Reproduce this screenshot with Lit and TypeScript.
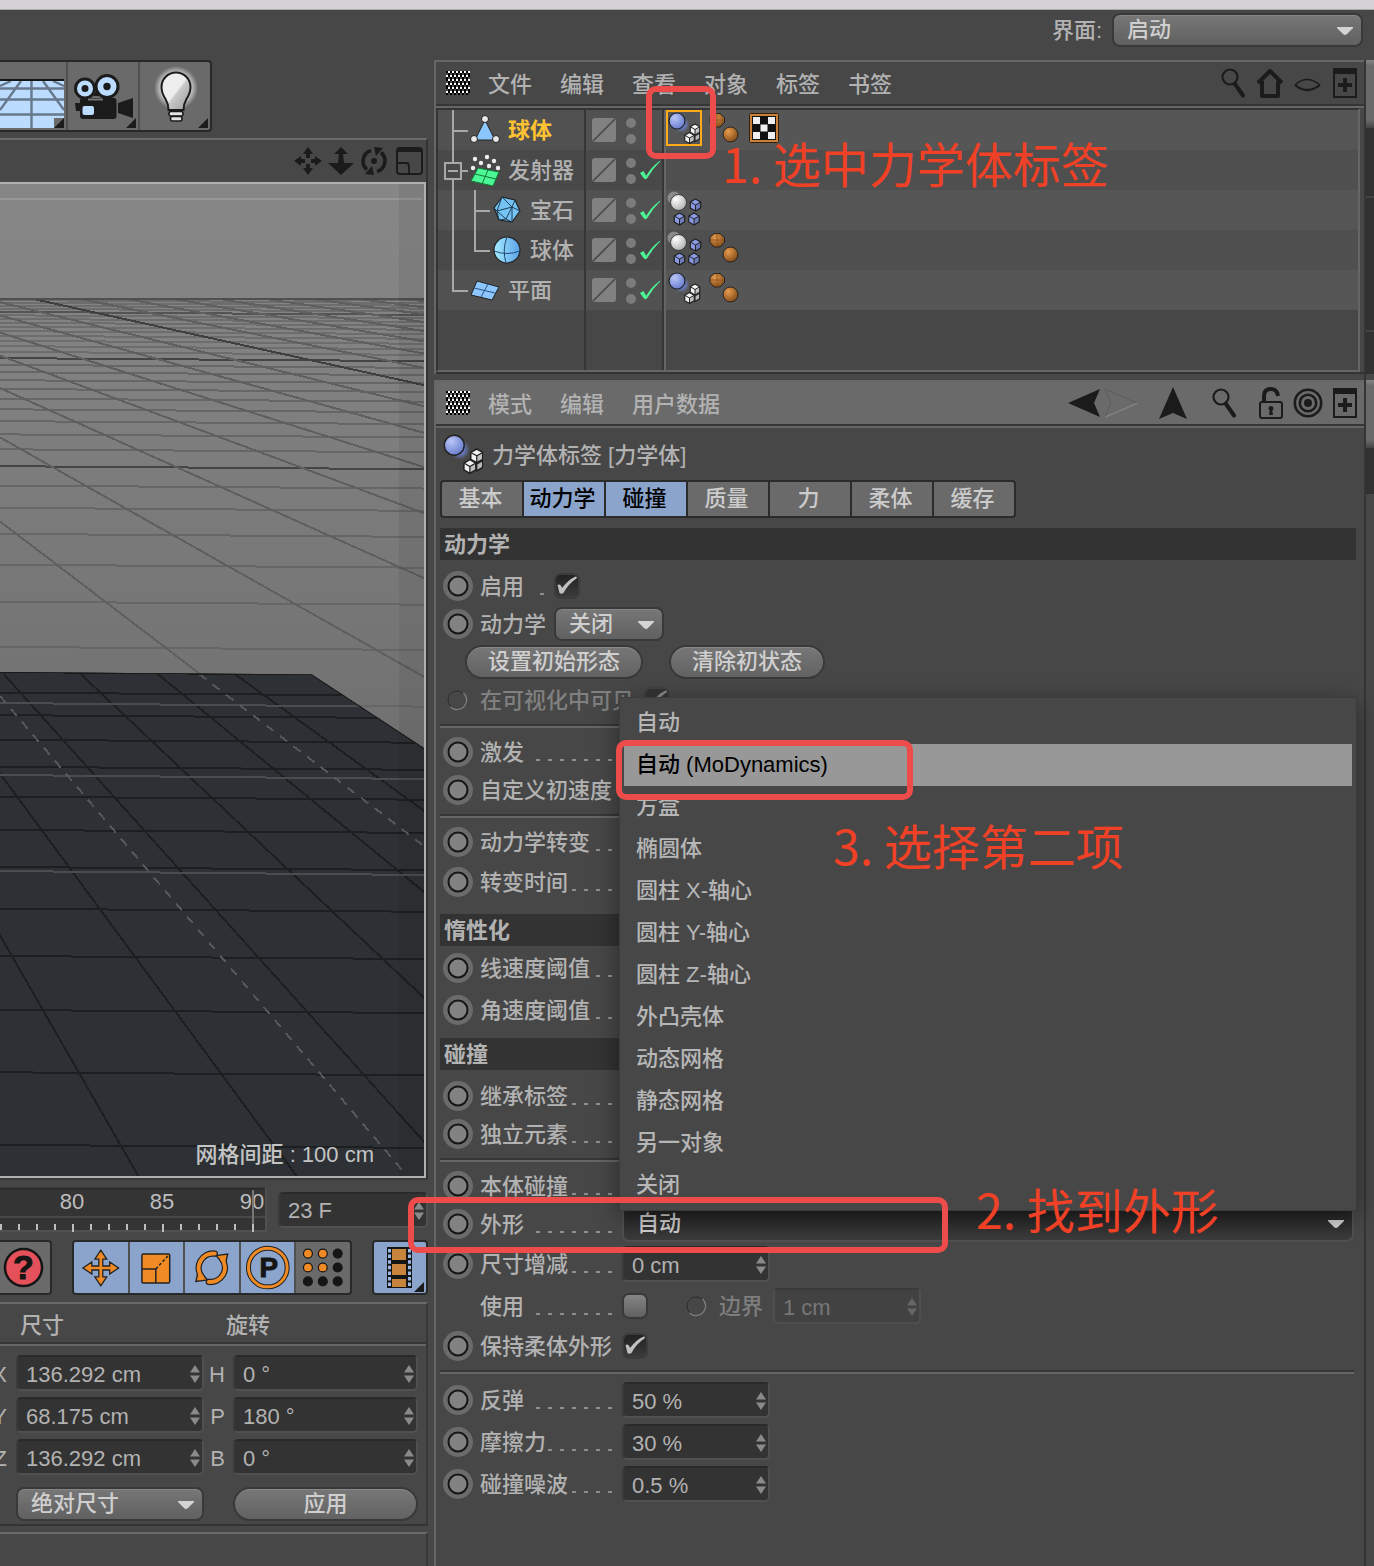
import { LitElement, html, svg, css, nothing } from "lit";
import type { TemplateResult, SVGTemplateResult } from "lit";
import { customElement, state } from "lit/decorators.js";
import { classMap } from "lit/directives/class-map.js";
import { styleMap } from "lit/directives/style-map.js";

/* ---------- shared SVG pieces ---------- */

const chevron = html`<svg class="chevron" viewBox="0 0 16 8" aria-hidden="true">
  <path d="M0 0h16v1l-6 6q-2 2-4 0l-6-6z" fill="currentColor" />
</svg>`;

const spinner = html`<svg class="spin" viewBox="0 0 12 20" aria-hidden="true">
  <path d="M6 1l5 7.500h-10zM6 19l5-7.500h-10z" fill="currentColor" />
</svg>`;

const cornerMark = (x: number, y: number) =>
  svg`<path d="M${x} ${y - 10}v10h-10z" fill="#1b1b1b" />`;

const cube = (cx: number, cy: number, r: number, fill: string): SVGTemplateResult => {
  const w = r * 0.87;
  const h = r / 2;
  return svg`<path
      d="M${cx} ${cy - r}l${w} ${h}v${r}l${-w} ${h}l${-w} ${-h}v${-r}z"
      fill=${fill} stroke="#222" stroke-width="1.2" stroke-linejoin="round" />
    <path d="M${cx - w} ${cy - h}l${w} ${h}l${w} ${-h}M${cx} ${cy}v${r}"
      fill="none" stroke="#222" stroke-width="1" />
    <path d="M${cx} ${cy}l${w} ${-h}v${r}l${-w} ${h}z" fill="#000" opacity=".2" />`;
};

const gradients = svg`<defs>
  <radialGradient id="blue" cx=".35" cy=".3" r=".8">
    <stop offset="0" stop-color="#b9c6f8" /><stop offset="1" stop-color="#6076c8" />
  </radialGradient>
  <radialGradient id="orange" cx=".35" cy=".3" r=".8">
    <stop offset="0" stop-color="#e79a4e" /><stop offset="1" stop-color="#7a4512" />
  </radialGradient>
  <radialGradient id="white" cx=".35" cy=".3" r=".8">
    <stop offset="0" stop-color="#fff" /><stop offset="1" stop-color="#a8a8a8" />
  </radialGradient>
  <radialGradient id="trail"><stop offset=".3" stop-color="#6f86e0" /><stop offset="1" stop-color="#6f86e0" stop-opacity="0" /></radialGradient>
</defs>`;

const dynamicsTag = (size: string) => html`<svg class=${size} viewBox=${size === "tag36" ? "0 0 36 36" : "2 2 32 32"} aria-hidden="true">
  ${gradients}
  <circle cx="15.500" cy="14.500" r="8" fill="url(#trail)" />
  <circle cx="11" cy="11" r="8" fill="url(#blue)" stroke="#222" stroke-width="1.200" />
  ${cube(29, 26, 5.500, "#e6e6e6")}${cube(29, 19.500, 5.500, "#f2f2f2")}${cube(23.500, 28, 5.500, "#f2f2f2")}
</svg>`;

const clonerTag = html`<svg class="tag36" viewBox="0 0 36 36" aria-hidden="true">
  ${gradients}
  <circle cx="8" cy="8" r="6.500" fill="#8b8b8b" />
  <circle cx="12.500" cy="12.500" r="8" fill="url(#white)" stroke="#333" />
  ${cube(29.500, 15, 6, "#8c9be6")}${cube(13.500, 29, 6, "#8c9be6")}${cube(28, 29, 6, "#8c9be6")}
</svg>`;

const ballsTag = html`<svg class="tag35" viewBox="0 0 35 36" aria-hidden="true">
  ${gradients}
  <path d="M6 3.500h6l4.500 4v5l-4.500 4.500h-6l-4-4.500v-5z" fill="url(#orange)" stroke="#222" />
  <path d="M9 3v14M2 10h14" stroke="#8a5420" stroke-width=".8" />
  <circle cx="22.500" cy="24.500" r="7.500" fill="url(#orange)" stroke="#222" />
</svg>`;

const checkerTag = html`<svg class="tag30" viewBox="0 0 30 36" aria-hidden="true">
  <rect x=".5" y="3.500" width="29" height="29" rx="1" fill="#c9813a" stroke="#33200c" />
  <rect x="3" y="6" width="24" height="24" fill="#111" />
  ${[0, 1, 2, 3, 4, 5, 6, 7, 8].map((i) =>
    i % 2 ? nothing : svg`<rect x=${4 + (i % 3) * 7.5} y=${7 + Math.floor(i / 3) * 7.5} width="7" height="7" fill="#f0f0f0" />`
  )}
</svg>`;

const grip = html`<svg class="grip" viewBox="0 0 24 24" shape-rendering="crispEdges" aria-hidden="true">
  ${Array.from({ length: 6 }, (_, r) =>
    Array.from({ length: 6 }, (_, c) => {
      const x = c * 4 + (r % 2 ? 0 : 2);
      return svg`<rect x=${x} y=${r * 4} width="2" height="2" fill="#fff" />
        <rect x=${(x + 2) % 24} y=${r * 4} width="2" height="2" fill="#000" />
        <rect x=${x} y=${r * 4 + 2} width="2" height="2" fill="#000" />`;
    })
  )}
</svg>`;

const searchIcon = html`<svg class="ico" viewBox="0 0 30 30" aria-hidden="true">
  <circle cx="11" cy="9" r="7.500" fill="none" stroke="#1b1b1b" stroke-width="2.200" />
  <path d="M16 16l8 11.500" stroke="#1b1b1b" stroke-width="4" stroke-linecap="round" />
</svg>`;

const homeIcon = html`<svg class="ico" viewBox="0 0 30 30" aria-hidden="true">
  <path d="M2 15l12-12 12 12M6 13v15h16v-15" fill="none" stroke="#1b1b1b" stroke-width="4" stroke-linejoin="round" />
</svg>`;

const eyeIcon = html`<svg class="ico" viewBox="0 0 30 30" aria-hidden="true">
  <path d="M2 17q12-11 25 0" fill="none" stroke="#1b1b1b" stroke-width="1.400" />
  <path d="M2 17q12 10 25 0" fill="none" stroke="#1b1b1b" stroke-width="2.200" />
</svg>`;

const addIcon = html`<svg class="ico" viewBox="0 0 30 30" aria-hidden="true">
  <path d="M4 1h22v28h-22z" fill="none" stroke="#1b1b1b" stroke-width="2" />
  <path d="M3 0h24v6h-24zM13 10h4v5h5v4h-5v5h-4v-5h-5v-4h5z" fill="#1b1b1b" />
</svg>`;

const backIcon = html`<svg class="ico wide" viewBox="0 0 34 30" aria-hidden="true">
  <path d="M1 15l32-14-6 14 6 14z" fill="#1b1b1b" />
</svg>`;

const forwardIcon = html`<svg class="ico wide" viewBox="0 0 34 30" aria-hidden="true">
  <path d="M33 15l-32-14 6 14-6 14" fill="none" stroke="#5c5c5c" />
  <path d="M33 15.500l-32 13.500" stroke="#808080" stroke-width="1.500" />
</svg>`;

const upIcon = html`<svg class="ico tall" viewBox="0 0 30 34" aria-hidden="true">
  <path d="M15 1l14 32-14-6-14 6z" fill="#1b1b1b" />
</svg>`;

const lockIcon = html`<svg class="ico tall" viewBox="0 0 30 34" aria-hidden="true">
  <rect x="4" y="16" width="22" height="16" rx="2" fill="none" stroke="#1b1b1b" stroke-width="2" />
  <path d="M8 15v-5q0-7 7-7q6 0 7 7" fill="none" stroke="#1b1b1b" stroke-width="4" />
  <path d="M15 20a2.500 2.500 0 0 1 1.300 4.600l.7 4.400h-4l.7-4.400a2.500 2.500 0 0 1 1.300-4.600z" fill="#1b1b1b" />
</svg>`;

const targetIcon = html`<svg class="ico" viewBox="0 0 30 30" aria-hidden="true">
  <g fill="none" stroke="#1b1b1b" stroke-width="2.600"><circle cx="15" cy="15" r="13.200" /><circle cx="15" cy="15" r="8.200" /></g>
  <circle cx="15" cy="15" r="4" fill="#1b1b1b" />
</svg>`;

/* ---------- viewport scene ---------- */

/** Perspective floor grid. Coordinates share the viewport's 424 x 992 box. */
const scene = (): SVGTemplateResult => {
  const HORIZON = 14;
  const VPX = -424;
  const rows: SVGTemplateResult[] = [];
  for (let k = 32; k >= -3; k--) {
    const y = HORIZON + 1 / (0.001972 + 0.000248 * k);
    const major = ((k % 10) + 10) % 10 === 7;
    rows.push(svg`<path d="M0 ${y - 1.5}L424 ${y + 1.5}" stroke=${major ? "#454545" : "#666"} stroke-width="2" opacity=${k > 17 ? 0.75 : 1} />`);
  }
  const rays: SVGTemplateResult[] = [];
  for (let n = 0; n <= 17; n++) {
    const inv = 1.311 + 0.46 * n;
    const x0 = VPX + inv * 100;
    rays.push(svg`<path d="M${x0} 114L${VPX + inv * 900} 914" stroke=${n === 7 ? "#3f3f3f" : "#5f5f5f"} stroke-width="2" />`);
  }
  const planeRows: SVGTemplateResult[] = [];
  for (let j = 0; j <= 12; j++) {
    const y = HORIZON + 1 / (0.002105 - 0.0000875 * j);
    planeRows.push(svg`<path d="M0 ${y - 1}L424 ${y + 2}" stroke="#1c1e20" stroke-width="2" />`);
  }
  const planeRays: SVGTemplateResult[] = [];
  for (let i = -3; i <= 3; i++) {
    const x = 3.7 + 77 * i;
    const s = 476 / (x - VPX);
    planeRays.push(svg`<path d="M${x} 490L${x + 502 / s} 992" stroke="#1c1e20" stroke-width="2" />`);
  }
  return svg`<defs>
      <linearGradient id="ground" x1="0" y1="0" x2="0" y2="1">
        <stop offset="0" stop-color="#868686" /><stop offset=".25" stop-color="#838383" /><stop offset="1" stop-color="#707070" />
      </linearGradient>
      <clipPath id="plane"><path d="M0 488L312 490.500L424 564V992H0z" /></clipPath>
      <clipPath id="floor"><path d="M0 114H424V600H0z" /></clipPath>
    </defs>
    <rect width="424" height="570" fill="url(#ground)" />
    <path d="M0 15H422" stroke="#979797" stroke-width="2" />
    <g clip-path="url(#floor)" shape-rendering="crispEdges">${rows}${rays}</g>
    <path d="M0 115H424" stroke="#4f4f4f" stroke-width="2" />
    <g clip-path="url(#plane)" shape-rendering="crispEdges">
      <rect y="480" width="424" height="512" fill="#2d3135" />
      ${planeRows}${planeRays}
      <path d="M0 519L424 523M0 591L424 595M0 687L424 691" stroke="#4a4c4e" stroke-width="2" />
      <path d="M199 490L424 662M0 512L402 986" stroke="#55585a" stroke-width="2" stroke-dasharray="9 8" />
      <path d="M0 488L312 490.500L424 564" fill="none" stroke="#1a1a1a" stroke-width="2" />
    </g>
    <rect x="399" width="25" height="992" fill="#000" opacity=".06" />`;
};

/* ---------- data ---------- */

interface ObjectRow {
  name: string;
  guide: string;
  indent: "shallow" | "deep";
  icon: TemplateResult;
  selected?: boolean;
  enabled: boolean;
  tags: TemplateResult[];
}

const objIcon = (body: SVGTemplateResult) => html`<svg class="obj-icon" viewBox="0 0 30 32" aria-hidden="true">
  <defs><linearGradient id="sky"><stop offset="0" stop-color="#a5ecff" /><stop offset="1" stop-color="#5aa2e8" /></linearGradient></defs>
  ${body}</svg>`;

const triangleIcon = objIcon(svg`<path d="M15 6l10 20h-20z" fill="#8cc6ff" stroke="#222" />
  ${[[15, 5], [4, 25], [26, 25]].map(([x, y]) => svg`<circle cx=${x} cy=${y} r="3.500" fill="#e8e8e8" stroke="#222" />`)}`);

const emitterIcon = objIcon(svg`<path d="M8 14l21 4l-6 14l-22-5z" fill="#4cf796" stroke="#173" />
  <path d="M18 16l-6 14M5 20l21 5" stroke="#173" />
  ${[[5, 5], [17, 3], [24, 7], [11, 9], [19, 12], [28, 14], [3, 14]].map(([x, y]) => svg`<circle cx=${x} cy=${y} r="2.200" fill="#eee" />`)}`);

const gemIcon = objIcon(svg`<path d="M10 3l13 3l5 11l-8 11l-13-2l-5-12z" fill="#74c4f4" stroke="#222" stroke-width="1.200" stroke-linejoin="round" />
  <path d="M10 3l10 10l-15 4l5-14M20 13l3-7M20 13l8 4M20 13l-6 12l-9-8l-3-3M5 17l2 9M14 25l6 3M14 25l-7 1M20 13l0 15" fill="none" stroke="#1f3b55" />`);

const sphereIcon = objIcon(svg`<circle cx="15" cy="16" r="13" fill="url(#sky)" stroke="#222" stroke-width="1.200" />
  <path d="M2 17q13 5 26 0M15 3q-5 13-1 26" fill="none" stroke="#1f4b75" />`);

const planeIcon = objIcon(svg`<path d="M7 7l22 6l-7 13l-21-5z" fill="#8cc6ff" stroke="#222" />
  <path d="M18 10l-7 13M4 14l21 5" stroke="#27557f" />`);

const OBJECTS: ObjectRow[] = [
  { name: "球体", guide: "M15 0V40M15 21H30", indent: "shallow", icon: triangleIcon, selected: true, enabled: false, tags: [ballsTag, checkerTag] },
  { name: "发射器", guide: "M15 0V12M15 30V40M24 21H30M7 13H23V29H7ZM10 21H20", indent: "shallow", icon: emitterIcon, enabled: true, tags: [] },
  { name: "宝石", guide: "M15 0V40M37 0V40M37 21H52", indent: "deep", icon: gemIcon, enabled: true, tags: [clonerTag] },
  { name: "球体", guide: "M15 0V40M37 0V21H52", indent: "deep", icon: sphereIcon, enabled: true, tags: [clonerTag, ballsTag] },
  { name: "平面", guide: "M15 0V21H30", indent: "shallow", icon: planeIcon, enabled: true, tags: [dynamicsTag("tag36"), ballsTag] },
];

const OBJECT_MENU = ["文件", "编辑", "查看", "对象", "标签", "书签"];
const ATTRIBUTE_MENU = ["模式", "编辑", "用户数据"];
const TABS = ["基本", "动力学", "碰撞", "质量", "力", "柔体", "缓存"];
const SHAPES = [
  "自动", "自动 (MoDynamics)", "方盒", "椭圆体", "圆柱 X-轴心", "圆柱 Y-轴心",
  "圆柱 Z-轴心", "外凸壳体", "动态网格", "静态网格", "另一对象", "关闭",
];
const COORDS = [
  ["X", "136.292 cm", "H", "0 °"],
  ["Y", "68.175 cm", "P", "180 °"],
  ["Z", "136.292 cm", "B", "0 °"],
];

/** Leader dashes are 4px long on a 12px pitch. */
const leader = (count: number) =>
  count ? html`<span class="dots" style=${styleMap({ width: `${count * 12 - 8}px` })}></span>` : nothing;

@customElement("app-root")
export class AppRoot extends LitElement {
  @state() private activeTabs = new Set(["动力学", "碰撞"]);
  @state() private highlighted = 1;

  static styles = css`
    :host {
      display: block;
      min-height: 100vh;
      background: #474747;
      color: #b2b2b2;
      font: 500 22px/30px "Liberation Sans", "Noto Sans CJK SC", sans-serif;
      overflow: hidden;
    }
    * { box-sizing: border-box; }
    svg { display: block; flex: none; }
    button, input, select { font: inherit; color: inherit; margin: 0; padding: 0; border: 0; background: none; }
    .app { display: flex; flex-direction: column; min-height: 100vh; }
    .titlebar { height: 10px; background: #d5d2d5; border-bottom: 1px solid #a9a7a9; }
    .topbar { display: flex; justify-content: flex-end; align-items: flex-start; gap: 10px; height: 50px; padding: 3px 11px 0 0; }
    .topbar label { line-height: 36px; }
    .workspace { flex: 1; display: grid; grid-template-columns: minmax(0, 434fr) minmax(0, 932fr) 8px; }

    /* drop-downs, fields, buttons */
    .drop { position: relative; display: flex; height: 34px; border: 2px solid #393939; border-radius: 8px; background: linear-gradient(#777, #606060); color: #cfcfcf; box-shadow: inset 0 1px #858585; }
    .drop select { appearance: none; flex: 1; min-width: 0; padding-left: 13px; line-height: 28px; outline: none; }
    .drop option { color: #222; }
    .chevron { position: absolute; right: 8px; top: 12px; width: 16px; height: 8px; pointer-events: none; color: #d4d4d4; }
    .drop.interface { width: 251px; }
    .drop.mode { width: 110px; }
    .field { position: relative; display: flex; height: 36px; border: 2px solid #505050; border-top-color: #2a2a2a; border-left-color: #3a3a3a; border-radius: 5px; background: #333; }
    .field input { flex: 1; width: 100%; min-width: 0; padding: 3px 0 0 8px; outline: none; }
    .spin { position: absolute; right: 1px; top: 7px; width: 12px; height: 20px; color: #8a8a8a; pointer-events: none; }
    .field.number { width: 148px; }
    .field.off { background: #424242; border-color: #4f4f4f; border-top-color: #3a3a3a; color: #777; }
    .field.off .spin { color: #666; }
    .pill { height: 34px; border: 2px solid #393939; border-radius: 17px; background: linear-gradient(#777, #626262); color: #cfcfcf; box-shadow: inset 0 1px #888; line-height: 30px; }

    /* left column */
    .left { display: flex; flex-direction: column; padding-right: 6px; }
    .tools { display: flex; border: 2px solid #292929; background: #6a6a6a; border-radius: 4px; overflow: hidden; }
    .tools button { display: block; border-left: 2px solid #505050; }
    .tools button:first-child { border-left: 0; }
    .tools.open { border-left: 0; border-radius: 0 4px 4px 0; }
    .tools.primary { align-self: flex-start; height: 72px; }
    .tools .on { background: #8ba4cc; }
    .viewport { margin-top: 6px; border-top: 2px solid #6a6a6a; border-right: 2px solid #333; border-bottom: 2px solid #3a3a3a; }
    .view-bar { display: flex; justify-content: flex-end; align-items: center; gap: 5px; height: 42px; padding-right: 3px; }
    .view-bar svg { width: 28px; height: 28px; }
    .view-bar button:last-child { margin-left: 2px; }
    .scene { position: relative; border: 2px solid #b0b0b0; border-left: 0; }
    .scene svg { width: 100%; height: auto; }
    .grid-info { position: absolute; right: 50px; bottom: 6px; color: #c4c4c4; }
    .time-row { display: flex; align-items: center; gap: 11px; margin-top: 7px; }
    .timeline { width: 267px; height: 45px; }
    .time-row .field { flex: 1; }
    .tool-row { display: flex; gap: 20px; margin-top: 8px; }
    .tool-row svg { width: 100%; height: 51px; }
    .tools.help { width: 52px; }
    .tools.modes { flex: 1; }
    .tools.film { width: 56px; }
    .tool-row button { flex: 1; }
    .coords { margin-top: 7px; border-top: 2px solid #6a6a6a; border-right: 2px solid #383838; border-bottom: 2px solid #343434; }
    .coord-head, .coord-grid { display: grid; grid-template-columns: 16px minmax(0, 188fr) 29px minmax(0, 185fr); padding-right: 8px; }
    .coord-head { height: 38px; align-items: center; padding-top: 6px; }
    .coord-head span:first-child { grid-column: 2; padding-left: 4px; }
    .coord-head span:last-child { grid-column: 3 / 5; padding-left: 22px; }
    .rule { height: 4px; border-top: 2px solid #363636; background: #666; }
    .coord-grid { row-gap: 6px; padding-top: 9px; align-items: center; }
    .axis { display: flex; justify-content: flex-end; padding: 3px 9px 0 0; }
    .axis.second { padding-right: 8px; }
    .coord-grid.actions { padding: 12px 8px 3px 0; }
    .coord-grid.actions > :first-child { grid-column: 2; }
    .coord-grid.actions > :last-child { grid-column: 4; }
    .status { flex: 1; margin-top: 6px; border-top: 2px solid #6a6a6a; border-right: 2px solid #383838; }

    /* right column */
    .right { display: flex; flex-direction: column; gap: 6px; border-right: 2px solid #353535; }
    .panel { position: relative; border-left: 2px solid #666; border-top: 2px solid #666; }
    .panel.attributes { flex: 1; }
    .menubar { display: flex; align-items: center; height: 42px; padding-left: 10px; }
    .attributes .menubar { background: #6a6a6a; }
    .grip { width: 24px; height: 24px; margin-right: 18px; }
    .menus { display: flex; flex: 1; gap: 28px; padding-top: 3px; white-space: nowrap; }
    .icons { display: flex; align-items: center; padding-right: 1px; }
    .icons button { display: flex; justify-content: center; width: 37px; }
    .ico { width: 30px; height: 30px; }
    .ico.wide { width: 34px; }
    .ico.tall { height: 34px; }
    .icons .gap-s { margin-right: 9px; }
    .icons .gap-m { margin-right: 15px; }

    .tree { min-height: 264px; margin-right: 4px; border: 2px solid #666; border-top-color: #343434; border-left-color: #343434; display: flex; flex-direction: column; }
    .tree-wrap { border-bottom: 2px solid #333; }
    .tree-row, .tree-rest { display: grid; grid-template-columns: 148px 80px minmax(0, 1fr); }
    .tree-row { height: 40px; background: #4f4f4f; }
    .tree-row:nth-child(odd) { background: #565656; }
    .tree-row .name, .tree-row .flags { background: #494949; }
    .tree-row:nth-child(odd) .name, .tree-row:nth-child(odd) .flags { background: #515151; }
    .tree-rest { flex: 1; }
    .name { display: flex; align-items: center; border-right: 2px solid #363636; white-space: nowrap; }
    .name span { padding-top: 2px; }
    .name.selected { color: #ffc233; font-weight: bold; }
    .guide { height: 40px; }
    .guide.shallow { width: 32px; }
    .guide.deep { width: 54px; }
    .obj-icon { width: 30px; height: 32px; margin-right: 8px; }
    .flags { border-right: 2px solid #666; }
    .flags svg, .flags.blank { box-shadow: inset -2px 0 #363636; }
    .flags svg { width: 78px; height: 40px; }
    .tags { display: flex; align-items: flex-start; gap: 6px; }
    .tag36 { width: 36px; height: 36px; }
    .tag35 { width: 35px; height: 36px; }
    .tag30 { width: 30px; height: 36px; }
    .tag-active { position: relative; border: 2px solid #ffab1a; width: 36px; height: 36px; }
    .tag-active > svg { width: 32px; height: 32px; }

    .divider { height: 4px; border-top: 2px solid #363636; background: #666; }
    .title { display: flex; align-items: center; gap: 9px; height: 52px; padding-left: 7px; }
    .title span { padding-top: 3px; }
    .title svg { width: 40px; height: 40px; }
    .tabs { display: inline-flex; margin-left: 4px; border: 2px solid #2b2b2b; border-radius: 4px; background: #6a6a6a; overflow: hidden; vertical-align: top; }
    .tabs button { width: 82px; height: 34px; padding-right: 3px; border-right: 2px solid #2b2b2b; color: #cbcbcb; line-height: 34px; }
    .tabs button:last-child { width: 80px; border-right: 0; }
    .tabs .on { background: #8ba4cc; color: #000; }
    .body { padding: 10px 8px 0 4px; }
    .section { margin: 0; padding: 0 4px; height: 32px; background: #333; font-size: 22px; line-height: 34px; font-weight: bold; }
    .group { padding: 7px 0; }
    .group.first { padding-bottom: 11px; }
    .group.second { padding-top: 1px; }
    .sep { height: 4px; margin: 5px 2px 5px 0; border-top: 2px solid #363636; background: #666; }
    .row { position: relative; display: flex; align-items: center; height: 38px; padding: 0 2px 0 3px; }
    .row.tall { height: 42px; }
    .row.actions { gap: 26px; padding-left: 25px; }
    .ring { width: 30px; height: 30px; margin-right: 7px; }
    .ring.spacer { visibility: hidden; }
    .label { display: flex; align-items: center; width: 132px; margin-right: 10px; padding-top: 2px; white-space: nowrap; }
    .narrow .label { width: 64px; }
    .dots { flex: none; height: 2px; margin: 13px 0 0 auto; background: repeating-linear-gradient(to right, #8e8e8e 0 4px, transparent 4px 12px); }
    .label.off { color: #808080; width: auto; }
    .check { position: relative; width: 26px; height: 26px; }
    .check input { appearance: none; display: block; width: 26px; height: 26px; border: 2px solid #393939; border-radius: 7px; background: linear-gradient(#858585, #606060); }
    .check input:checked { border-color: #3c3c3c; background: linear-gradient(#222, #3b3b3b); }
    .check svg { position: absolute; inset: 0; width: 26px; height: 26px; pointer-events: none; }
    .check.off { opacity: 0.55; }
    .wide-178 { width: 178px; }
    .wide-156 { width: 156px; }
    .bound { display: flex; align-items: center; margin-left: 34px; color: #7e7e7e; }
    .bound .label { width: auto; }

    .combo { position: relative; flex: 1; display: flex; height: 36px; border: 2px solid #505050; border-top-color: #2a2a2a; border-radius: 7px; background: linear-gradient(#222, #3c3c3c); color: #d0d0d0; }
    .combo select { appearance: none; flex: 1; padding-left: 13px; outline: none; }
    .combo option { color: #222; }
    .popup { position: absolute; left: -4px; right: -4px; bottom: 30px; z-index: 2; margin: 0; padding: 4px; list-style: none; background: #474747; box-shadow: 0 0 0 1px #3c3c3c, 0 6px 24px rgba(0, 0, 0, 0.45); color: #b6b6b6; }
    .popup li { height: 42px; padding-left: 12px; line-height: 42px; }
    .popup .hot { background: #989898; color: #000; }

    /* tutorial call-outs drawn over the interface */
    .mark { position: absolute; z-index: 3; border: 6px solid #ee4c4a; border-radius: 10px; pointer-events: none; }
    .mark.on-tag { left: -22px; top: -26px; width: 70px; height: 73px; }
    .mark.on-option { left: -4px; top: 42px; width: 297px; height: 60px; }
    .mark.on-shape { left: -32px; top: -8px; width: 540px; height: 56px; }
    .note { position: absolute; z-index: 4; margin: 0; color: #f04126; font: 400 48px/60px "Noto Sans CJK SC", sans-serif; white-space: nowrap; pointer-events: none; }
    .note.select-tag { left: 286px; top: 70px; }
    .note.find-shape { left: 536px; top: -27px; }
    .note.choose { left: 213px; top: 116px; }

    .rail { display: flex; flex-direction: column; }
    .rail .thumb { height: 68px; background: linear-gradient(#858585, #6a6a6a 6px, #6a6a6a 60px, #444); }
    .rail .track { background: #313131; }
    .rail .t1 { height: 68px; }
    .rail .t2 { height: 136px; border-top: 2px solid #424242; border-bottom: 2px solid #424242; }
    .rail .t3 { height: 42px; margin-bottom: 6px; }
    .rail .t4 { height: 46px; }
  `;

  private toggleTab(tab: string) {
    const next = new Set(this.activeTabs);
    next.has(tab) ? next.delete(tab) : next.add(tab);
    this.activeTabs = next;
  }

  private ring(label: string, off = false) {
    return html`<button class="ring" aria-label=${label}>
      <svg viewBox="0 0 30 30" width="30" height="30">
        ${off
          ? svg`<circle cx="14" cy="15" r="9" fill="none" stroke="#2c2c2c" /><path d="M20.500 8a9.500 9.500 0 0 1-13 14" fill="none" stroke="#7c7c7c" stroke-width="1.500" />`
          : svg`<circle cx="15" cy="15" r="15" fill="#6b6b6b" /><circle cx="15" cy="15" r="9.500" fill="#828282" stroke="#161616" stroke-width="2" />`}
      </svg>
    </button>`;
  }

  private row(name: string, dots: number, control: unknown = nothing, opts: { tall?: boolean; ring?: boolean; narrow?: boolean; id?: string } = {}) {
    const text = opts.id ? html`<label for=${opts.id}>${name}</label>` : html`<span>${name}</span>`;
    return html`<div class=${classMap({ row: true, tall: !!opts.tall, narrow: !!opts.narrow })}>
      ${opts.ring === false ? html`<span class="ring spacer"></span>` : this.ring(name)}
      <div class="label">${text}${leader(dots)}</div>
      ${control}
    </div>`;
  }

  private number(id: string, value: string, off = false) {
    return html`<div class=${classMap({ field: true, number: true, off })}>
      <input id=${id} type="text" .value=${value} ?disabled=${off} />${spinner}
    </div>`;
  }

  private check(id: string, on: boolean, off = false) {
    return html`<span class=${classMap({ check: true, off })}>
      <input id=${id} type="checkbox" .checked=${on} ?disabled=${off} />
      ${on ? html`<svg viewBox="0 0 26 26" aria-hidden="true"><path d="M3.500 12q3-2 4.500 3q6-8 13.500-11.500q2 0 1 2q-8 5-13 14.500q-2.500 1.500-4 0z" fill="#c0c0c0" /></svg>` : nothing}
    </span>`;
  }

  private renderTopTools() {
    return html`<div class="tools open primary" role="toolbar">
      <button aria-label="地面"><svg width="66" height="68" viewBox="0 0 66 68">
        <rect y="17" width="64" height="49" fill="#bcdcff" />
        <path d="M31.500 19V66M0 26.500H64M0 37.500H64M0 52.500H64M21 19L0 48M43 19L64 48M11 19L0 24M53 19L64 24" stroke="#66798c" stroke-width="2.400" fill="none" />
        <rect y="17" width="64" height="2" fill="#151515" />
        <rect x="54" y="56" width="10" height="10" fill="#6a6a6a" />${cornerMark(64, 66)}
      </svg></button>
      <button aria-label="摄像机"><svg width="70" height="68" viewBox="0 0 70 68">
        <g stroke="#1b1b1b" stroke-width="3" fill="#bcdcff"><circle cx="17" cy="26.500" r="9.500" /><circle cx="39" cy="24.500" r="11" /></g>
        <circle cx="17" cy="26.500" r="3.500" fill="#1b1b1b" /><circle cx="39" cy="24.500" r="3.700" fill="#1b1b1b" />
        <rect x="12" y="36" width="36.500" height="21" rx="3" fill="#1b1b1b" />
        <path d="M20 37.500H35" stroke="#777" stroke-width="2" />
        <path d="M7 41h6v8h-5zM50 41l15-5v20l-15-5zM25 34l4-6 4 6z" fill="#1b1b1b" />
        <rect x="14.500" y="44" width="11.500" height="9" rx="2" fill="#bcdcff" />${cornerMark(68, 66)}
      </svg></button>
      <button aria-label="灯光"><svg width="70" height="68" viewBox="0 0 70 68">
        <defs>
          <radialGradient id="glow"><stop offset=".5" stop-color="#fff" /><stop offset="1" stop-color="#fff" stop-opacity="0" /></radialGradient>
          <linearGradient id="bulb" x1="0" y1="0" x2="1" y2="1"><stop offset=".5" stop-color="#eee" /><stop offset=".55" stop-color="#c8c8c8" /><stop offset="1" stop-color="#999" /></linearGradient>
        </defs>
        <circle cx="36" cy="26" r="22" fill="url(#glow)" />
        <path d="M28.500 48q0-6-3-11q-4-6-4-12a14.500 14.500 0 0 1 29 0q0 6-4 12q-3 5-3 11z" fill="url(#bulb)" stroke="#1b1b1b" stroke-width="2" />
        <rect x="29" y="49.500" width="14" height="4.500" rx="2" fill="#e4e4e4" stroke="#1b1b1b" stroke-width="1.600" />
        <rect x="30.500" y="54.500" width="11.500" height="4.500" rx="2" fill="#e4e4e4" stroke="#1b1b1b" stroke-width="1.600" />${cornerMark(68, 66)}
      </svg></button>
    </div>`;
  }

  private renderViewport() {
    return html`<section class="viewport">
      <div class="view-bar">
        <button aria-label="平移"><svg viewBox="0 0 28 28"><path d="M14 0l5 7h-3v4h-4v-4h-3zM14 28l5-7h-3v-4h-4v4h-3zM0 14l7-5v3h4v4h-4v3zM28 14l-7-5v3h-4v4h4v3z" fill="#1b1b1b" /></svg></button>
        <button aria-label="缩放"><svg viewBox="0 0 28 28"><path d="M14 0l7 7h-5l1 9h10l-13 12l-13-12h10l1-9h-5z" fill="#1b1b1b" /></svg></button>
        <button aria-label="旋转视图"><svg viewBox="0 0 28 28"><path d="M11 3.500a11 11 0 0 0-4 19M17 24.500a11 11 0 0 0 4-19" fill="none" stroke="#1b1b1b" stroke-width="3.600" /><path d="M14 0l9 1-7 8zM14 28l-9-1 7-8z" fill="#1b1b1b" /><circle cx="14" cy="14" r="3" fill="#1b1b1b" /></svg></button>
        <button aria-label="切换视图"><svg viewBox="0 0 28 28"><rect x="2" y="1" width="25" height="26" rx="3" fill="none" stroke="#1b1b1b" stroke-width="2" /><path d="M2 1h25v4h-25z" fill="#1b1b1b" /><path d="M2 16h9q3 0 3 3v8" fill="none" stroke="#1b1b1b" stroke-width="1.800" /></svg></button>
      </div>
      <div class="scene">
        <svg viewBox="0 0 424 992" aria-hidden="true">${scene()}</svg>
        <span class="grid-info">网格间距 : 100 cm</span>
      </div>
    </section>`;
  }

  private renderTime() {
    return html`<div class="time-row">
      <svg class="timeline" viewBox="0 0 267 45">
        <path d="M0 0H264q3 0 3 3V45H0z" fill="#505050" />
        <path d="M0 1H263q2 0 2 2V43H0z" fill="#343434" />
        <path d="M0 30H265" stroke="#484848" stroke-width="2" /><path d="M0 1.500H265" stroke="#2a2a2a" stroke-width="2" />
        ${Array.from({ length: 15 }, (_, i) => svg`<path d="M${1 + i * 18} 37V${i % 5 === 4 ? 45 : 43}" stroke="#bdbdbd" stroke-width="2" />`)}
        <g fill="#bdbdbd" text-anchor="middle"><text x="72" y="22">80</text><text x="162" y="22">85</text><text x="252" y="22">90</text></g>
        <path d="M253 3V37" stroke="#777" stroke-width="2" />
      </svg>
      <div class="field"><input aria-label="当前帧" type="text" .value=${"23 F"} />${spinner}</div>
    </div>
    <div class="tool-row">
      <div class="tools open help"><button aria-label="帮助"><svg viewBox="0 0 50 51">
        <circle cx="23.500" cy="25.500" r="18.500" fill="#e4515a" stroke="#151515" stroke-width="2.500" />
        <text x="23.500" y="37" font-size="34" font-weight="bold" text-anchor="middle" fill="#151515" stroke="#151515">?</text>
      </svg></button></div>
      <div class="tools modes">
        <button class="on" aria-label="移动"><svg viewBox="0 0 54 51"><path d="M27 8l6 9h-4v7h7v-4l9 6l-9 6v-4h-7v7h4l-6 9l-6-9h4v-7h-7v4l-9-6l9-6v4h7v-7h-4z" fill="#f08a24" stroke="#222" stroke-width="1.300" /></svg></button>
        <button class="on" aria-label="缩放对象"><svg viewBox="0 0 54 51"><rect x="12" y="12" width="28" height="29" rx="1.500" fill="#f08a24" stroke="#222" stroke-width="1.500" /><path d="M12 27h14v14" fill="none" stroke="#222" stroke-width="1.500" /><path d="M26 27l13-14" stroke="#222" stroke-width="1.500" stroke-dasharray="3 2" /></svg></button>
        <button class="on" aria-label="旋转对象"><svg viewBox="0 0 54 51">
          <path d="M30 11.500a14.500 14.500 0 0 0-13 23.500M24 40a14.500 14.500 0 0 0 13-23.500" fill="none" stroke="#222" stroke-width="6.400" stroke-linecap="round" />
          <path d="M31 13.500l12-1.500l-2.500 11zM23 38l-12 1.500l2.500-11z" fill="#f08a24" stroke="#222" stroke-width="1.400" />
          <path d="M30 11.500a14.500 14.500 0 0 0-13 23.500M24 40a14.500 14.500 0 0 0 13-23.500" fill="none" stroke="#f08a24" stroke-width="4" stroke-linecap="round" />
        </svg></button>
        <button class="on" aria-label="位置"><svg viewBox="0 0 54 51">
          <circle cx="27" cy="25.500" r="19.500" fill="none" stroke="#222" stroke-width="5" /><circle cx="27" cy="25.500" r="19.500" fill="none" stroke="#f08a24" stroke-width="3" />
          <text x="28" y="35" font-size="28" font-weight="bold" text-anchor="middle" fill="#151515" stroke="#151515">P</text>
        </svg></button>
        <button aria-label="点级别"><svg viewBox="0 0 54 51">
          ${[0, 1, 2].map((r) => [0, 1, 2].map((c) => svg`<circle cx=${12 + c * 15} cy=${11.5 + r * 14} r="4.500" fill=${r < 2 && c < 2 ? "#f08a24" : "#151515"} stroke="#151515" stroke-width="1.200" />`))}
        </svg></button>
      </div>
      <div class="tools film"><button class="on" aria-label="渲染动画"><svg viewBox="0 0 52 51">
        <path d="M13 5h25v41h-25z" fill="#151515" />
        <path d="M18 7h14v11h-14zM18 22h14v11h-14zM18 37h14v8h-14z" fill="#c8843c" />
        ${Array.from({ length: 7 }, (_, i) => svg`<path d="M14 ${7 + i * 5.6}h3v3.500h-3zM34 ${7 + i * 5.6}h3v3.500h-3z" fill="#9cb8e4" />`)}
        ${cornerMark(50, 50)}
      </svg></button></div>
    </div>`;
  }

  private renderCoords() {
    return html`<section class="coords">
      <div class="coord-head"><span>尺寸</span><span>旋转</span></div>
      <div class="rule"></div>
      <div class="coord-grid">
        ${COORDS.map(([a, size, b, angle]) => html`
          <label class="axis" for="size-${a}">${a}</label>
          <div class="field"><input id="size-${a}" type="text" .value=${size} />${spinner}</div>
          <label class="axis second" for="rot-${b}">${b}</label>
          <div class="field"><input id="rot-${b}" type="text" .value=${angle} />${spinner}</div>`)}
      </div>
      <div class="coord-grid actions">
        <div class="drop"><select aria-label="尺寸模式"><option>绝对尺寸</option></select>${chevron}</div>
        <button class="pill">应用</button>
      </div>
    </section>`;
  }

  private renderObjects() {
    return html`<section class="panel objects">
      <div class="menubar">${grip}
        <nav class="menus">${OBJECT_MENU.map((m) => html`<button>${m}</button>`)}</nav>
        <div class="icons">
          <button aria-label="搜索">${searchIcon}</button><button aria-label="主页">${homeIcon}</button>
          <button aria-label="显示">${eyeIcon}</button><button aria-label="新建面板">${addIcon}</button>
        </div>
      </div>
      <div class="divider"></div>
      <div class="tree-wrap"><div class="tree">
        ${OBJECTS.map((o) => html`<div class="tree-row">
          <div class=${classMap({ name: true, selected: !!o.selected })}>
            <svg class="guide ${o.indent}" viewBox="0 0 ${o.indent === "deep" ? 54 : 32} 40" shape-rendering="crispEdges" aria-hidden="true">
              <path d=${o.guide} fill="none" stroke="#a8a8a8" stroke-width="2" />
            </svg>${o.icon}<span>${o.name}</span>
          </div>
          <div class="flags"><svg viewBox="0 0 78 40" aria-hidden="true">
            <rect x="6" y="8" width="24" height="24" rx="3" fill="#818181" /><path d="M7 31L29 9" stroke="#474747" stroke-width="1.600" />
            <circle cx="45" cy="13" r="5" fill="#7b7b7b" /><circle cx="45" cy="29" r="5" fill="#7b7b7b" />
            ${o.enabled ? svg`<path d="M54.500 23l3-1.500l2.500 5q6-10 14-15.500q-8 8-13.500 17.500q-2 1-3-1z" fill="#4cf796" stroke="#4cf796" stroke-width=".8" />` : nothing}
          </svg></div>
          <div class="tags">
            ${o.selected ? html`<span class="tag-active">${dynamicsTag("active")}<span class="mark on-tag"></span></span>` : nothing}
            ${o.tags}
          </div>
        </div>`)}
        <div class="tree-rest"><div class="name"></div><div class="flags blank"></div></div>
      </div></div>
      <p class="note select-tag">1. 选中力学体标签</p>
    </section>`;
  }

  private renderShapeRow() {
    return html`<div class="row">
      ${this.ring("外形")}
      <div class="label"><label for="shape">外形</label>${leader(7)}</div>
      <div class="combo">
        <select id="shape">${SHAPES.map((s) => html`<option>${s}</option>`)}</select>${chevron}
        <ul class="popup" role="listbox">
          ${SHAPES.map((s, i) => html`<li role="option" aria-selected=${i === this.highlighted} class=${classMap({ hot: i === this.highlighted })}
            @mouseenter=${() => (this.highlighted = i)}>${s}</li>`)}
          <span class="mark on-option"></span>
          <p class="note choose">3. 选择第二项</p>
        </ul>
      </div>
      <span class="mark on-shape"></span>
      <p class="note find-shape">2. 找到外形</p>
    </div>`;
  }

  private renderAttributes() {
    return html`<section class="panel attributes">
      <div class="menubar">${grip}
        <nav class="menus">${ATTRIBUTE_MENU.map((m) => html`<button>${m}</button>`)}</nav>
        <div class="icons">
          <button aria-label="后退">${backIcon}</button><button class="gap-m" aria-label="前进">${forwardIcon}</button>
          <button class="gap-m" aria-label="向上">${upIcon}</button><button class="gap-s" aria-label="搜索">${searchIcon}</button>
          <button aria-label="锁定">${lockIcon}</button><button aria-label="目标">${targetIcon}</button><button aria-label="新建面板">${addIcon}</button>
        </div>
      </div>
      <div class="divider"></div>
      <div class="title">${dynamicsTag("large")}<span>力学体标签 [力学体]</span></div>
      <div class="tabs" role="tablist">
        ${TABS.map((t) => html`<button role="tab" aria-selected=${this.activeTabs.has(t)} class=${classMap({ on: this.activeTabs.has(t) })}
          @click=${() => this.toggleTab(t)}>${t}</button>`)}
      </div>
      <div class="body">
        <h2 class="section">动力学</h2>
        <div class="group first">
          ${this.row("启用", 1, this.check("enable", true), { narrow: true, id: "enable" })}
          ${this.row("动力学", 0, html`<div class="drop mode"><select id="mode"><option>关闭</option></select>${chevron}</div>`, { narrow: true, id: "mode" })}
          <div class="row actions"><button class="pill wide-178">设置初始形态</button><button class="pill wide-156">清除初状态</button></div>
          <div class="row">${this.ring("在可视化中可见", true)}<div class="label off"><label for="visible">在可视化中可见</label></div>${this.check("visible", true, true)}</div>
          <div class="sep"></div>
          ${this.row("激发", 7)}
          ${this.row("自定义初速度", 0)}
          <div class="sep"></div>
          ${this.row("动力学转变", 2)}
          ${this.row("转变时间", 4, nothing, { tall: true })}
        </div>
        <h2 class="section">惰性化</h2>
        <div class="group second">
          ${this.row("线速度阈值", 2, nothing, { tall: true })}
          ${this.row("角速度阈值", 2, nothing, { tall: true })}
        </div>
        <h2 class="section">碰撞</h2>
        <div class="group">
          ${this.row("继承标签", 4)}
          ${this.row("独立元素", 4)}
          <div class="sep"></div>
          ${this.row("本体碰撞", 4)}
          ${this.renderShapeRow()}
          ${this.row("尺寸增减", 4, this.number("grow", "0 cm"), { tall: true, id: "grow" })}
          ${this.row("使用", 7, html`${this.check("use", false)}
            <div class="bound">${this.ring("边界", true)}<label class="label" for="margin">边界</label>${this.number("margin", "1 cm", true)}</div>`,
            { tall: true, ring: false, id: "use" })}
          ${this.row("保持柔体外形", 0, this.check("keep", true), { id: "keep" })}
          <div class="sep"></div>
          ${this.row("反弹", 7, this.number("bounce", "50 %"), { tall: true, id: "bounce" })}
          ${this.row("摩擦力", 6, this.number("friction", "30 %"), { tall: true, id: "friction" })}
          ${this.row("碰撞噪波", 4, this.number("noise", "0.5 %"), { tall: true, id: "noise" })}
        </div>
      </div>
    </section>`;
  }

  render() {
    return html`<div class="app">
      <div class="titlebar"></div>
      <header class="topbar">
        <label for="interface">界面:</label>
        <div class="drop interface"><select id="interface"><option>启动</option></select>${chevron}</div>
      </header>
      <main class="workspace">
        <div class="left">${this.renderTopTools()}${this.renderViewport()}${this.renderTime()}${this.renderCoords()}<div class="status"></div></div>
        <div class="right">${this.renderObjects()}${this.renderAttributes()}</div>
        <div class="rail">
          <div class="thumb"></div><div class="track t1"></div><div class="track t2"></div><div class="track t3"></div>
          <div class="thumb"></div><div class="track t4"></div>
        </div>
      </main>
    </div>`;
  }
}
